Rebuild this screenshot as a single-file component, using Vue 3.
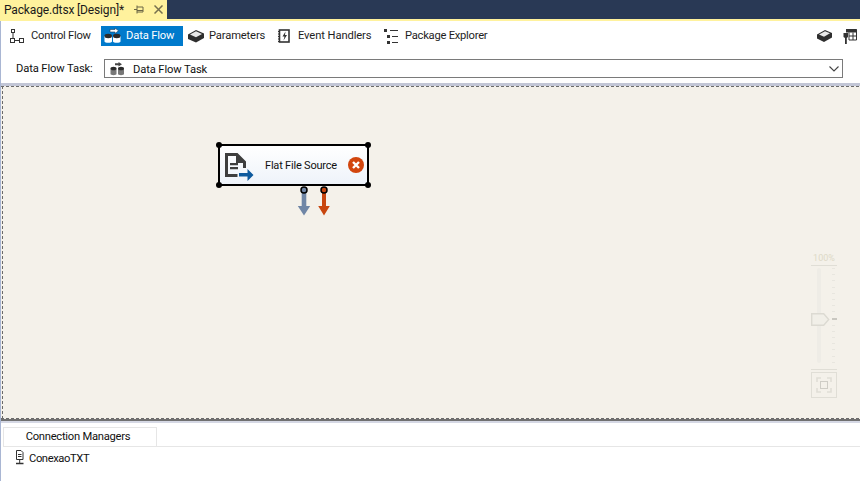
<script setup>
const tabs = [
  { id: 'cf', label: 'Control Flow' },
  { id: 'df', label: 'Data Flow', active: true },
  { id: 'pa', label: 'Parameters' },
  { id: 'ev', label: 'Event Handlers' },
  { id: 'pe', label: 'Package Explorer' },
]
const ticks = Array.from({ length: 16 }, (_, i) => i)
</script>

<template>
  <div class="app">
    <header class="titlebar">
      <div class="doc-tab">
        <span class="doc-name">Package.dtsx [Design]*</span>
        <svg class="pin" width="10" height="9" viewBox="0 0 10 9"><path d="M0 4.500h3M3 .5v8M3 2h6v5H3M3 5.500h6" fill="none" stroke="#6b6646" stroke-width="1"/></svg>
        <svg class="close" width="9" height="9" viewBox="0 0 9 9"><path d="M.5 .5l8 8M8.500 .5l-8 8" stroke="#77714f" stroke-width="1.500"/></svg>
      </div>
    </header>
    <div class="doc-line"></div>

    <div class="body">
      <nav class="tabs">
        <div v-for="t in tabs" :key="t.id" class="tab" :class="[t.id, { active: t.active }]">
          <svg v-if="t.id === 'cf'" width="15" height="15" viewBox="0 0 15 15" fill="none" stroke="#333" stroke-width="1">
            <rect x="1.500" y=".5" width="3" height="3" />
            <rect x=".5" y="9.500" width="4" height="4" />
            <rect x="9.500" y="9.500" width="4" height="4" />
            <path d="M3 4v5M5 11.500h4" />
          </svg>
          <svg v-else-if="t.id === 'df'" width="18" height="16" viewBox="0 0 18 16">
            <path d="M6 1.500h5V0l3.500 2.800L11 5.500V4H6z" fill="#fff" stroke="#1f3f5c" stroke-width=".6" />
            <path d="M.5 8v5.500c0 1.800 7.500 1.800 7.500 0V8z" fill="#fff" />
            <ellipse cx="4.250" cy="8" rx="3.750" ry="2.200" fill="#2a2a2a" />
            <path d="M9 8v5.500c0 1.800 7.500 1.800 7.500 0V8z" fill="#fff" />
            <ellipse cx="12.750" cy="8" rx="3.750" ry="2.200" fill="#2a2a2a" />
          </svg>
          <svg v-else-if="t.id === 'pa'" width="16" height="14" viewBox="0 0 16 14">
            <path d="M0 5.500L8 1l8 3.500v4.500L8 13.500 0 10z" fill="#2e2e2e" />
            <path d="M2 5.500L8 2.300l6 2.600L8 8.200z" fill="#e8e8e8" />
          </svg>
          <svg v-else-if="t.id === 'ev'" width="12" height="14" viewBox="0 0 12 14">
            <rect x="1.500" y="1" width="9.500" height="12" fill="#fff" stroke="#333" stroke-width="1.600" />
            <path d="M0 2.500h2M0 5h2M0 7.500h2M0 10h2M0 12.500h2" stroke="#333" />
            <path d="M7.500 2.500L4.500 7.500h2L5.500 11.500l3.500-5.500H7z" fill="#333" />
          </svg>
          <svg v-else width="15" height="15" viewBox="0 0 15 15" fill="#333">
            <rect x="0" y="0" width="3" height="3" /><rect x="3" y="6" width="3" height="3" /><rect x="3" y="12" width="3" height="3" />
            <path d="M6 1h8v1H6zM8 7h6v1H8zM8 13h6v1H8z" />
          </svg>
          <span>{{ t.label }}</span>
        </div>
        <div class="tools">
          <svg width="15" height="12" viewBox="0 0 15 12">
            <path d="M0 4.500L8 0l7 3v4.500L7 12 0 8.500z" fill="#2e2e2e" />
            <path d="M2 4.500L8 1.300l5 2L7 6.800z" fill="#e8e8e8" />
          </svg>
          <svg width="14" height="15" viewBox="0 0 14 15">
            <path d="M3 .5h10.500v10.500H6" fill="#fff" stroke="#333" />
            <path d="M3 .5h11v3H3z" fill="#333" />
            <path d="M6 3.500v7.500M10 3.500v7.500M6 7h8" stroke="#333" />
            <path d="M.5 4h4.500v4L3.800 9v6H2V9L.5 8z" fill="#333" />
          </svg>
        </div>
      </nav>

      <div class="task-row">
        <label class="task-label">Data Flow Task:</label>
        <div class="combo">
          <svg class="combo-icon" width="15" height="14" viewBox="0 0 15 14">
            <path d="M5 1.200h3.500V0L12 2.200 8.500 4.500V3.200H5z" fill="#444" />
            <path d="M.5 6.500v5.500c0 1.500 6 1.500 6 0V6.500z" fill="#777" />
            <ellipse cx="3.500" cy="6.500" rx="3" ry="1.800" fill="#2a2a2a" />
            <path d="M8 6.500v5.500c0 1.500 6 1.500 6 0V6.500z" fill="#777" />
            <ellipse cx="11" cy="6.500" rx="3" ry="1.800" fill="#2a2a2a" />
          </svg>
          <span class="combo-text">Data Flow Task</span>
          <svg class="chevron" width="10" height="6" viewBox="0 0 10 6"><path d="M.5 .5L5 5 9.500 .5" fill="none" stroke="#444" stroke-width="1.100" /></svg>
        </div>
      </div>

      <div class="splitter"></div>

      <main class="canvas">
        <div class="node">
          <i class="h tl"></i><i class="h tr"></i><i class="h bl"></i><i class="h br"></i>
          <svg class="node-icon" width="29" height="29" viewBox="0 0 29 29">
            <path d="M0 0h12.500L21 8.500V15h-3V10h-7V3H3v18h9.500v3H0z" fill="#3e3e3e" />
            <path d="M5 10h8v2.200H5zM5 14h8v2.200H5z" fill="#3e3e3e" />
            <path d="M14 20h8.500v-4l6 6-6 6v-4.500H14z" fill="#0e5a9e" />
          </svg>
          <span class="node-title">Flat File Source</span>
          <svg class="node-err" width="16" height="16" viewBox="0 0 16 16">
            <circle cx="8" cy="8" r="8" fill="#d2460f" />
            <path d="M5 5l6 6M11 5l-6 6" stroke="#fff" stroke-width="2.400" />
          </svg>
          <svg class="out blue" width="12" height="30" viewBox="0 0 12 30">
            <path d="M3.700 6h4.600v14h3.900L6 29.500-.2 20h3.900z" fill="#6f86a6" />
            <circle cx="6" cy="4" r="3" fill="#6f86a6" stroke="#000" stroke-width="1.500" />
          </svg>
          <svg class="out red" width="12" height="30" viewBox="0 0 12 30">
            <path d="M4 6h4v14h3.800L6 29.500 .2 20H4z" fill="#c8460f" />
            <circle cx="6" cy="4" r="3" fill="#c8460f" stroke="#000" stroke-width="1.500" />
          </svg>
        </div>

        <aside class="zoom">
          <div class="zoom-val">100%</div>
          <div class="zoom-slider">
            <div class="track"></div>
            <div class="thumb">
              <svg width="19" height="13" viewBox="0 0 19 13"><path d="M.7 .7h12l5 5.800-5 5.800H.7z" fill="#f1efe8" stroke="#dcdad2" stroke-width="1.400" /></svg>
            </div>
            <div class="scale">
              <i v-for="n in ticks" :key="n" :class="{ mid: n === 8 }"></i>
            </div>
          </div>
          <div class="fit">
            <svg width="16" height="16" viewBox="0 0 16 16" fill="none">
              <path d="M1 5V1h4M11 1h4v4M15 11v4h-4M5 15H1v-4" stroke="#e0ded6" stroke-width="1.600" />
              <rect x="4.500" y="4.500" width="7" height="7" stroke="#cfcdc6" stroke-width="1" />
            </svg>
          </div>
        </aside>
      </main>

      <div class="divider"></div>

      <section class="managers">
        <div class="mgr-tabline"><div class="mgr-tab">Connection Managers</div></div>
        <div class="mgr-item">
          <svg width="9" height="15" viewBox="0 0 9 15" fill="none" stroke="#333">
            <path d="M1.500 .5H6L8 2.500V9.500H1.500z" fill="#fff" />
            <path d="M3 4.500h3.500M3 6.500h3.500" />
            <path d="M4.700 9.500v3.500" />
            <path d="M1 13.500h7.500" stroke-width="1.500" />
          </svg>
          <span>ConexaoTXT</span>
        </div>
      </section>
    </div>
  </div>
</template>

<style>
html, body { margin: 0; padding: 0; background: #fff; overflow: hidden; }
</style>

<style scoped>
.app {
  width: 860px;
  height: 481px;
  display: flex;
  flex-direction: column;
  font-family: Roboto, "Open Sans", "Liberation Sans", sans-serif;
  font-size: 11.200px;
  letter-spacing: -0.25px;
  color: #111;
  background: #fff;
  overflow: hidden;
}
.titlebar { height: 19px; background: #293955; display: flex; flex: none; }
.doc-tab {
  width: 167px;
  background: #fff29d;
  display: flex;
  align-items: center;
  padding-left: 4px;
  box-sizing: border-box;
  color: #1a1a1a;
}
.doc-name { font-size: 12px; letter-spacing: -0.15px; width: 130px; white-space: nowrap; }
.close { margin-left: 10px; }
.doc-line { height: 2px; background: #fff29d; flex: none; }
.body {
  flex: 1;
  min-height: 0;
  display: flex;
  flex-direction: column;
  border-left: 1px solid #a9b6d3;
}
.tabs {
  flex: none;
  height: 25px;
  margin-top: 5px;
  padding-right: 3px;
  display: flex;
  align-items: flex-start;
}
.tab {
  display: flex;
  align-items: center;
  white-space: nowrap;
  height: 20px;
  color: #1e1e1e;
  box-sizing: border-box;
}
.tab span { margin-bottom: 2px; }
.tab.cf { width: 100px; padding-left: 9px; gap: 6px; }
.tab.df { width: 82px; padding-left: 3px; gap: 4px; background: #007acc; color: #fff; letter-spacing: -0.15px; }
.tab.pa { width: 89px; padding-left: 5px; gap: 5px; letter-spacing: -0.15px; }
.tab.ev { width: 106px; padding-left: 6px; gap: 8px; letter-spacing: -0.1px; }
.tab.pe { gap: 6px; padding-left: 6px; }
.tools { margin-left: auto; display: flex; gap: 11px; height: 20px; align-items: center; }
.task-row { flex: none; height: 32px; display: flex; align-items: flex-start; }
.task-label { width: 103px; padding: 11px 0 0 15px; box-sizing: border-box; white-space: nowrap; letter-spacing: -0.12px; }
.combo {
  width: 739px;
  height: 19px;
  margin-top: 8px;
  border: 1px solid #7a7a7a;
  box-sizing: border-box;
  display: flex;
  align-items: center;
  padding-left: 5px;
}
.combo-text { margin-left: 8px; margin-top: 2px; letter-spacing: -0.12px; }
.chevron { margin-left: auto; margin-right: 3px; }
.splitter { flex: none; height: 3px; background: #c2c6d6; }
.canvas {
  position: relative;
  flex: 1;
  min-height: 0;
  background-color: #f4f1ea;
  background-image:
    repeating-linear-gradient(90deg, #6a6a6a 0 3px, transparent 3px 5px),
    repeating-linear-gradient(90deg, #6a6a6a 0 3px, transparent 3px 5px),
    repeating-linear-gradient(0deg, #6a6a6a 0 3px, transparent 3px 5px);
  background-repeat: no-repeat;
  background-size: 100% 1px, 100% 1px, 1px 100%;
  background-position: 0 0, 0 100%, 1px 0;
}
.divider {
  flex: none;
  height: 4px;
  background: linear-gradient(#707070 0 2px, #d5d8e4 2px 4px);
}
.node {
  position: absolute;
  left: 217px;
  top: 58px;
  width: 151px;
  height: 42px;
  box-sizing: border-box;
  border: 2px solid #000;
  border-radius: 3px;
  background: linear-gradient(#ffffff, #eef3fa);
  display: flex;
  align-items: center;
}
.h { position: absolute; width: 6px; height: 6px; border-radius: 50%; background: #000; }
.h.tl { left: -4px; top: -4px; }
.h.tr { right: -4px; top: -4px; }
.h.bl { left: -4px; bottom: -4px; }
.h.br { right: -4px; bottom: -4px; }
.node-icon { margin-left: 5px; margin-top: 5px; flex: none; }
.node-title { margin-left: 11px; font-size: 11px; letter-spacing: -0.2px; white-space: nowrap; color: #111; }
.node-err { position: absolute; left: 128px; top: 11px; }
.out { position: absolute; top: 40px; overflow: visible; }
.out.blue { left: 78px; }
.out.red { left: 98px; }
.zoom {
  position: absolute;
  left: 810px;
  top: 166px;
  width: 26px;
  color: #ddd9c7;
  font-size: 9px;
  letter-spacing: 0;
  text-align: center;
}
.zoom-val { height: 13px; line-height: 12px; border-bottom: 1px solid #e0ded6; }
.zoom-slider { position: relative; height: 103px; }
.track { position: absolute; left: 6px; top: 2px; width: 4px; height: 95px; background: #eeece6; border-radius: 2px; }
.thumb { position: absolute; left: 0; top: 47px; line-height: 0; }
.scale {
  position: absolute;
  left: 21px;
  top: 2px;
  height: 95px;
  width: 5px;
  display: flex;
  flex-direction: column;
  justify-content: space-between;
  align-items: flex-start;
}
.scale i { display: block; width: 3px; height: 1px; background: #e8e6df; }
.scale i.mid { width: 5px; height: 2px; background: #c9c7c0; }
.fit { border-top: 1px solid #e0ded6; padding-top: 2px; }
.fit svg {
  display: block;
  box-sizing: content-box;
  border: 1px solid #e0ded6;
  padding: 4px;
}
.managers { height: 58px; background: #fff; padding-left: 2px; flex: none; }
.mgr-tabline { height: 23px; border-bottom: 1px solid #e6e6e6; box-sizing: content-box; position: relative; }
.mgr-tab {
  position: relative;
  top: 4px;
  width: 154px;
  height: 19px;
  box-sizing: border-box;
  border: 1px solid #e6e6e6;
  border-bottom: none;
  background: #fff;
  text-align: center;
  line-height: 17px;
  padding-right: 4px;
}
.mgr-item { display: flex; align-items: center; gap: 5px; padding: 3px 0 0 12px; }
.mgr-item span { margin-top: 2px; letter-spacing: -0.4px; }
</style>
